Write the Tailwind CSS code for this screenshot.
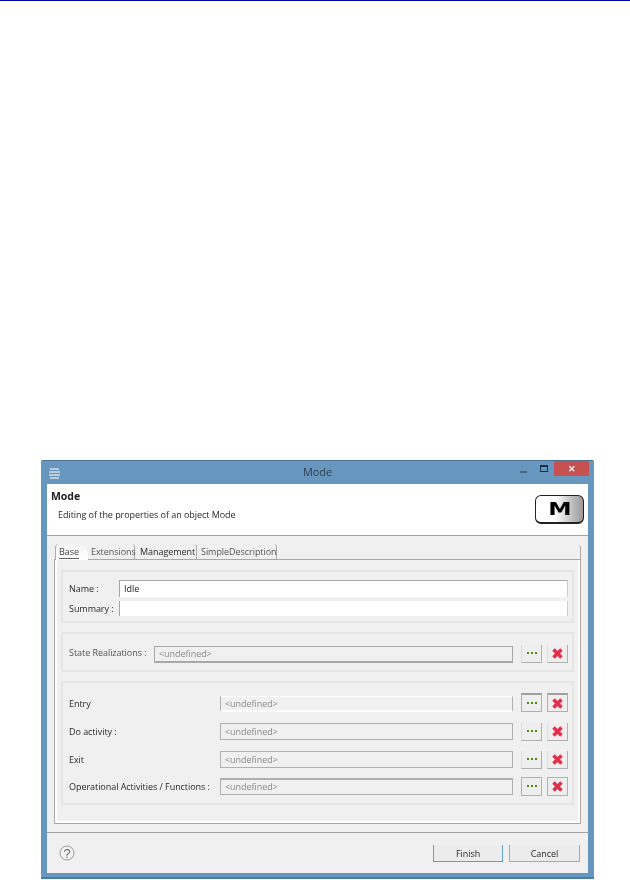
<!DOCTYPE html>
<html><head><meta charset="utf-8"><script src="https://cdn.jsdelivr.net/npm/@tailwindcss/browser@4"></script></head>
<body class="m-0 bg-white">
<div class="w-[630px] h-[880px] overflow-hidden flex flex-col font-['Open_Sans',sans-serif] text-[9px] tracking-[-0.05px] text-[#2a2a2a] blur-[0.35px]">
  <div class="h-px bg-[#0000a0] shrink-0"></div>
  <div class="ml-[41px] mt-[459px] w-[553px] h-[419px] bg-[#6797bf] border-t border-[#4a7396] rounded-t-[2px] flex flex-col px-[6px] pb-[4px] shrink-0 border-b-2 border-b-[#4f7ba0]">
    <div class="h-[23px] shrink-0 grid grid-cols-[1fr_auto_1fr]">
      <div class="flex items-center">
        <svg width="14" height="12" viewBox="0 0 14 12" class="ml-[1px]"><g stroke="#b8ccdc" stroke-width="2"><path d="M2 2h9M1 5h11M1 8h11M2 11h9"/></g></svg>
      </div>
      <div class="text-center text-[11px] leading-[21px] text-[#2c3e50]">Mode</div>
      <div class="flex justify-end items-start mr-[-1px]">
        <div class="w-[7px] h-[2px] bg-[#48647d] mt-[10px]"></div>
        <div class="w-[8px] h-[7px] border border-t-[2px] border-[#1c2f40] mt-[4px] ml-[13px]"></div>
        <div class="w-[35px] h-[15px] ml-[6px] bg-[#c75050] text-white text-[9px] font-bold flex items-center justify-center">✕</div>
      </div>
    </div>
    <div class="flex-1 bg-[#f0f0f0] flex flex-col min-h-0">
      <div class="h-[52px] shrink-0 bg-white border-b border-[#a0a0a0] flex justify-between pl-[4px] pr-[4px]">
        <div>
          <div class="font-bold text-[10.5px] text-[#222] mt-[5px] leading-[14px]">Mode</div>
          <div class="ml-[7px] mt-[5px] leading-[14px] text-[9px]">Editing of the properties of an object Mode</div>
        </div>
        <div class="mt-[11px] w-[49px] h-[29px] rounded-[6px] border border-[#222] border-b-2 bg-gradient-to-r from-white from-40% to-[#999] flex items-center justify-center font-['DejaVu_Sans'] font-bold text-[18px] text-black leading-none overflow-hidden"><span class="scale-x-[1.3] inline-block">M</span></div>
      </div>
      <div class="flex-1 min-h-0 px-[7px] pt-[8px] pb-[8px] flex flex-col">
        <div class="h-[15px] flex items-end shrink-0 text-[9px] pl-[1px]">
          <div class="w-[33px] pl-[3px] bg-gradient-to-b from-[#f4f4f4] to-white rounded-tr-[10px] border-l border-[#aaa] rounded-tl-[4px] leading-[15px] relative z-10 mb-[-1px] h-[16px]"><span class="border-b border-[#666] text-[#444]">Base</span></div>
          <div class="w-[47px] h-[15px] pl-[3px] border-r border-[#aaa] rounded-tr-[3px] leading-[15px] text-[#555]">Extensions</div>
          <div class="w-[62px] h-[15px] pl-[5px] border-r border-[#aaa] rounded-tr-[3px] leading-[15px]">Management</div>
          <div class="w-[80px] h-[15px] pl-[4px] border-r border-[#aaa] rounded-tr-[3px] leading-[15px] text-[#555]">SimpleDescription</div>
          <div class="flex-1"></div>
          <div class="w-[4px] h-[14px] border-r border-[#aaa] rounded-tr-[3px]"></div>
        </div>
        <div class="flex-1 min-h-0 border border-[#a8a8a8] shadow-[inset_0_-2px_0_#fff,inset_2px_0_0_#fff,inset_-2px_0_0_#fff] px-[6px] pt-[10px] flex flex-col">
          <div class="h-[53px] shrink-0 border-2 border-[#e5e5e5] pt-[8px] pl-[6px] pr-[4px] flex flex-col gap-[4px]">
            <div class="flex items-center h-[17px]">
              <div class="w-[50px]">Name :</div>
              <div class="flex-1 h-[17px] bg-white border-t border-l border-r border-[#a8a8a8] border-r-[#ccc] pl-[4px] leading-[15px] text-[#222]">Idle</div>
            </div>
            <div class="flex items-center h-[15px]">
              <div class="w-[50px] whitespace-nowrap">Summary :</div>
              <div class="flex-1 h-[15px] bg-white border-l border-r border-[#a8a8a8] border-r-[#ccc]"></div>
            </div>
          </div>
          <div class="h-[40px] mt-[9px] shrink-0 border-2 border-[#e5e5e5] pl-[6px] pr-[4px] pt-[4px] flex items-center">
            <div class="w-[85px] whitespace-nowrap text-[#555] -mt-[2px]">State Realizations :</div>
            <div class="w-[359px] h-[17px] bg-[#f0f0f0] border border-[#a8a8a8] border-b-[2px] pl-[4px] leading-[14px] text-[#8a8a8a]">&lt;undefined&gt;</div>
            <div class="w-[21px] h-[18px] ml-[8px] bg-[#eee] border-r border-b border-l border-[#b0b0b0] border-l-[#ddd] flex items-center justify-center"><svg width="10" height="3" viewBox="0 0 10 3"><path d="M0 0h2v2H0zM4 0h2v2H4zM8 0h2v2H8z" fill="#4f8a10"/></svg></div>
            <div class="w-[21px] h-[18px] ml-[5px] bg-[#eee] border-r border-b border-l border-[#b0b0b0] border-l-[#ddd] flex items-center justify-center"><svg width="11" height="11" viewBox="0 0 11 11"><path d="M1.5 1.5 9.5 9.5M9.5 1.5 1.5 9.5" stroke="#e0304a" stroke-width="3.5"/></svg></div>
          </div>
          <div class="h-[124px] mt-[9px] shrink-0 border-2 border-[#e5e5e5] pl-[6px] pr-[4px] pt-[10px] flex flex-col">
            <div class="h-[19px] flex items-center">
              <div class="w-[151px] mt-[2px]">Entry</div>
              <div class="w-[293px] h-[16px] mt-[2px] bg-[#f0f0f0] border-l border-r border-[#b0b0b0] border-t border-t-white border-b-2 border-b-white pl-[4px] leading-[14px] text-[#8a8a8a]">&lt;undefined&gt;</div>
              <div class="w-[21px] h-[19px] ml-[8px] bg-[#eee] border border-[#b0b0b0] border-t-2 border-t-[#a0a0a0] flex items-center justify-center"><svg width="10" height="3" viewBox="0 0 10 3"><path d="M0 0h2v2H0zM4 0h2v2H4zM8 0h2v2H8z" fill="#4f8a10"/></svg></div>
              <div class="w-[21px] h-[19px] ml-[5px] bg-[#eee] border border-[#b0b0b0] border-t-2 border-t-[#a0a0a0] flex items-center justify-center"><svg width="11" height="11" viewBox="0 0 11 11"><path d="M1.5 1.5 9.5 9.5M9.5 1.5 1.5 9.5" stroke="#e0304a" stroke-width="3.5"/></svg></div>
            </div>
            <div class="h-[19px] mt-[10px] flex items-center">
              <div class="w-[151px]">Do activity :</div>
              <div class="w-[293px] h-[17px] bg-[#f0f0f0] border border-[#b0b0b0] pl-[4px] leading-[15px] text-[#8a8a8a]">&lt;undefined&gt;</div>
              <div class="w-[21px] h-[18px] ml-[8px] bg-[#eee] border-r border-b border-l border-[#b0b0b0] border-l-[#ddd] flex items-center justify-center"><svg width="10" height="3" viewBox="0 0 10 3"><path d="M0 0h2v2H0zM4 0h2v2H4zM8 0h2v2H8z" fill="#4f8a10"/></svg></div>
              <div class="w-[21px] h-[18px] ml-[5px] bg-[#eee] border-r border-b border-l border-[#b0b0b0] border-l-[#ddd] flex items-center justify-center"><svg width="11" height="11" viewBox="0 0 11 11"><path d="M1.5 1.5 9.5 9.5M9.5 1.5 1.5 9.5" stroke="#e0304a" stroke-width="3.5"/></svg></div>
            </div>
            <div class="h-[19px] mt-[9px] flex items-center">
              <div class="w-[151px]">Exit</div>
              <div class="w-[293px] h-[17px] bg-[#f0f0f0] border border-[#b0b0b0] pl-[4px] leading-[15px] text-[#8a8a8a]">&lt;undefined&gt;</div>
              <div class="w-[21px] h-[18px] ml-[8px] bg-[#eee] border-r border-b border-l border-[#b0b0b0] border-l-[#ddd] flex items-center justify-center"><svg width="10" height="3" viewBox="0 0 10 3"><path d="M0 0h2v2H0zM4 0h2v2H4zM8 0h2v2H8z" fill="#4f8a10"/></svg></div>
              <div class="w-[21px] h-[18px] ml-[5px] bg-[#eee] border-r border-b border-l border-[#b0b0b0] border-l-[#ddd] flex items-center justify-center"><svg width="11" height="11" viewBox="0 0 11 11"><path d="M1.5 1.5 9.5 9.5M9.5 1.5 1.5 9.5" stroke="#e0304a" stroke-width="3.5"/></svg></div>
            </div>
            <div class="h-[19px] mt-[8px] flex items-center">
              <div class="w-[151px] whitespace-nowrap">Operational Activities / Functions :</div>
              <div class="w-[293px] h-[17px] bg-[#f0f0f0] border border-[#b0b0b0] border-t-2 pl-[4px] leading-[14px] text-[#8a8a8a]">&lt;undefined&gt;</div>
              <div class="w-[21px] h-[19px] ml-[8px] bg-[#eee] border border-[#b0b0b0] flex items-center justify-center"><svg width="10" height="3" viewBox="0 0 10 3"><path d="M0 0h2v2H0zM4 0h2v2H4zM8 0h2v2H8z" fill="#4f8a10"/></svg></div>
              <div class="w-[21px] h-[19px] ml-[5px] bg-[#eee] border border-[#b0b0b0] flex items-center justify-center"><svg width="11" height="11" viewBox="0 0 11 11"><path d="M1.5 1.5 9.5 9.5M9.5 1.5 1.5 9.5" stroke="#e0304a" stroke-width="3.5"/></svg></div>
            </div>
          </div>
        </div>
      </div>
      <div class="h-[41px] shrink-0 border-t border-[#a0a0a0] flex items-start pl-[12px] pr-[8px]">
        <svg width="16" height="16" viewBox="0 0 16 16" class="mt-[12px]"><circle cx="8" cy="8" r="7" fill="#f4f4f4" stroke="#999"/><text x="8" y="12.5" text-anchor="middle" font-size="13" font-family="Liberation Sans" fill="#666">?</text></svg>
        <div class="flex-1"></div>
        <div class="w-[70px] h-[17px] mt-[12px] pt-[1px] bg-[#ececec] border-l border-r border-b border-[#5a9fd8] flex items-center justify-center">Finish</div>
        <div class="w-[71px] h-[17px] mt-[12px] pt-[1px] ml-[6px] bg-[#ececec] border-l border-r border-b border-[#aaa] flex items-center justify-center">Cancel</div>
      </div>
    </div>
  </div>
</div>
</body></html>
